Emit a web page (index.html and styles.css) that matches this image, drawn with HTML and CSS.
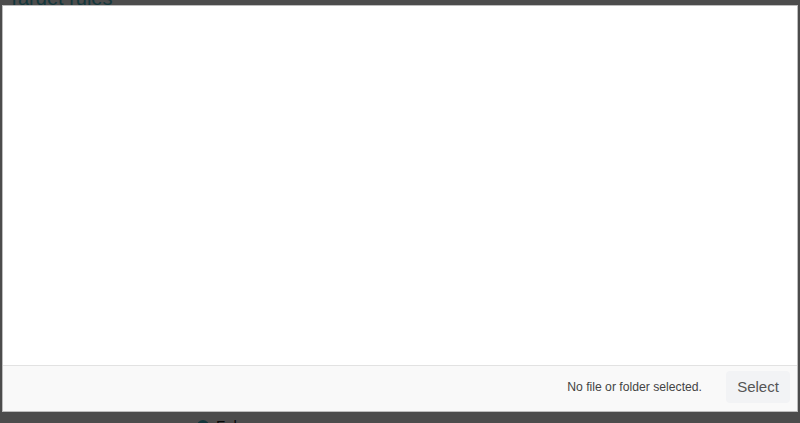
FILE: index.html
```html
<!DOCTYPE html>
<html>
<head>
<meta charset="utf-8">
<link rel="stylesheet" href="styles.css">
</head>
<body>
<div class="page">
  <h2 class="title">Target rules</h2>
  <div class="spacer"></div>
  <div class="radio-row">
    <span class="radio"></span>
    <span class="radio-label">False</span>
  </div>
</div>
<div class="overlay"></div>
<div class="modal">
  <div class="modal-body"></div>
  <div class="modal-footer">
    <span class="status">No file or folder selected.</span>
    <button class="select-btn">Select</button>
  </div>
</div>
</body>
</html>
```
FILE: styles.css
```css
html, body {
  margin: 0;
  padding: 0;
  height: 100%;
  overflow: hidden;
  font-family: "Liberation Sans", Arial, sans-serif;
}
body {
  background: #ffffff;
}
.page {
  padding: 0 8px;
}
.title {
  margin: -14px 0 0 0;
  font-size: 20px;
  font-weight: 400;
  color: #45b8c8;
  line-height: 24px;
}
.spacer {
  height: 407px;
}
.radio-row {
  display: flex;
  align-items: center;
  gap: 7px;
  padding-left: 189px;
}
.radio {
  width: 12px;
  height: 12px;
  border-radius: 50%;
  background: #45b8c8;
}
.radio-label {
  font-size: 15px;
  color: #222;
}
.overlay {
  position: fixed;
  inset: 0;
  background: rgba(0, 0, 0, 0.7);
}
.modal {
  position: fixed;
  left: 2px;
  top: 5px;
  width: 794px;
  height: 405px;
  background: #ffffff;
  border: 1px solid #bdbdbd;
  display: flex;
  flex-direction: column;
  box-sizing: content-box;
}
.modal-body {
  flex: 1;
}
.modal-footer {
  height: 46px;
  box-sizing: border-box;
  padding-bottom: 3px;
  border-top: 1px solid #e2e2e2;
  background: #f9f9f9;
  display: flex;
  align-items: center;
  justify-content: flex-end;
  padding-right: 7px;
  gap: 24px;
}
.status {
  font-size: 12.2px;
  color: #444;
}
.select-btn {
  font-family: "Liberation Sans", Arial, sans-serif;
  font-size: 15px;
  color: #555;
  background: #f2f3f5;
  border: none;
  border-radius: 4px;
  width: 64px;
  height: 32px;
  padding: 0 0 2px 0;
}
```
